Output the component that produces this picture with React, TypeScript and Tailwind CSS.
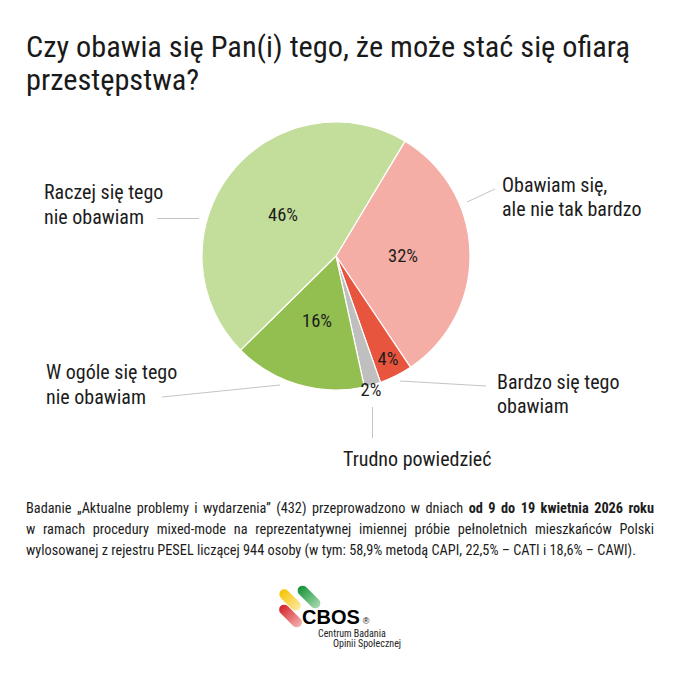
const slices = [
  { value: 32, color: "#f4aea6" },
  { value: 4, color: "#e8553f" },
  { value: 2, color: "#bfbfbf" },
  { value: 16, color: "#93bf50" },
  { value: 46, color: "#c3dd9b" },
];

const CX = 336;
const CY = 256;
const R = 134;
const START = 31;

function pt(deg: number, r = R) {
  const a = (deg * Math.PI) / 180;
  return [CX + r * Math.sin(a), CY - r * Math.cos(a)];
}

function slicePaths() {
  let a = START;
  return slices.map((s) => {
    const sweep = (s.value / 100) * 360;
    const [x1, y1] = pt(a);
    const [x2, y2] = pt(a + sweep);
    const large = sweep > 180 ? 1 : 0;
    a += sweep;
    return {
      d: `M${CX},${CY} L${x1},${y1} A${R},${R} 0 ${large} 1 ${x2},${y2} Z`,
      color: s.color,
    };
  });
}

function PieChart() {
  const paths = slicePaths();
  return (
    <svg
      width="680"
      height="380"
      viewBox="0 100 680 380"
      className="block font-['Roboto_Condensed',Roboto,sans-serif]"
    >
      {paths.map((p, i) => (
        <path key={i} d={p.d} fill={p.color} stroke="#ffffff" strokeWidth="1.2" strokeLinejoin="round" />
      ))}

      {/* leader lines */}
      <g stroke="#c4c4c4" strokeWidth="1">
        <line x1="157" y1="218.5" x2="199" y2="218.5" />
        <line x1="467" y1="202" x2="495" y2="189" />
        <line x1="162" y1="397" x2="280" y2="385" />
        <line x1="400" y1="381" x2="486" y2="386" />
        <line x1="372.5" y1="407" x2="372.5" y2="438" />
      </g>

      <g fill="#1c1c1c" fontSize="18.5" textAnchor="middle" dominantBaseline="central">
        <text x="283" y="215">46%</text>
        <text x="403" y="256">32%</text>
        <text x="317" y="321">16%</text>
        <text x="388" y="359">4%</text>
        <text x="371" y="390">2%</text>
      </g>

      <g fill="#1c1c1c" fontSize="20" dominantBaseline="central">
        <text x="44" y="192">Raczej się tego</text>
        <text x="44" y="217">nie obawiam</text>
        <text x="502" y="185">Obawiam się,</text>
        <text x="502" y="209">ale nie tak bardzo</text>
        <text x="46" y="372">W ogóle się tego</text>
        <text x="46" y="397">nie obawiam</text>
        <text x="497" y="382">Bardzo się tego</text>
        <text x="497" y="406">obawiam</text>
        <text x="343" y="459">Trudno powiedzieć</text>
      </g>
    </svg>
  );
}

function CbosLogo() {
  return (
    <div className="relative mx-auto mt-[24px] h-[64px] w-[126px]">
      <svg width="46" height="44" viewBox="0 0 46 44" className="absolute left-0 top-0">
        <defs>
          <linearGradient id="gy" x1="0" y1="0" x2="1" y2="0">
            <stop offset="0" stopColor="#f6c400" />
            <stop offset="1" stopColor="#fbe8a2" />
          </linearGradient>
          <linearGradient id="gg" x1="0" y1="0" x2="1" y2="0">
            <stop offset="0" stopColor="#149237" />
            <stop offset="1" stopColor="#a7d9ad" />
          </linearGradient>
          <linearGradient id="gr" x1="0" y1="0" x2="1" y2="0">
            <stop offset="0" stopColor="#d4232a" />
            <stop offset="1" stopColor="#f5b0b0" />
          </linearGradient>
        </defs>
        <rect x="0" y="10" width="26" height="10" rx="5" fill="url(#gy)" transform="rotate(45 13 15)" />
        <rect x="18" y="7" width="28" height="10" rx="5" fill="url(#gg)" transform="rotate(45 32 12)" />
        <rect x="-0.5" y="26" width="28" height="10" rx="5" fill="url(#gr)" transform="rotate(45 13.5 31)" />
      </svg>
      <div className="flex flex-col whitespace-nowrap pl-[25px] pt-[22px]">
        <div className="flex items-end leading-none text-black">
          <span className="font-['Liberation_Sans',Arial,sans-serif] text-[20px] font-bold leading-[20px]">CBOS</span>
          <span className="mb-[1px] ml-[3px] font-['Liberation_Sans',Arial,sans-serif] text-[9px] leading-none">®</span>
        </div>
        <div className="ml-[16px] mt-[2px] font-['Roboto_Condensed',sans-serif] text-[10px] leading-[10px] text-[#222]">
          Centrum Badania
        </div>
        <div className="ml-[31px] font-['Roboto_Condensed',sans-serif] text-[10px] leading-[10px] text-[#222]">
          Opinii Społecznej
        </div>
      </div>
    </div>
  );
}

export default function App() {
  return (
    <div className="h-[679px] w-[680px] overflow-hidden bg-white font-['Roboto_Condensed',Roboto,sans-serif] text-[#1a1a1a]">
      <header className="h-[100px] px-[26px] pt-[30px]">
        <h1 className="whitespace-nowrap text-[30.3px] font-normal leading-[33px]">
          Czy obawia się Pan(i) tego, że może stać się ofiarą
          <br />
          przestępstwa?
        </h1>
      </header>

      <PieChart />

      <div className="mt-[18px] px-[26px] text-[14.3px] leading-[21px] text-[#1c1c1c]">
        <div className="text-justify [text-align-last:justify]">
          Badanie „Aktualne problemy i wydarzenia” (432) przeprowadzono w dniach{" "}
          <span className="font-bold">od 9 do 19 kwietnia 2026 roku</span>
        </div>
        <div className="text-justify [text-align-last:justify]">
          w ramach procedury mixed-mode na reprezentatywnej imiennej próbie pełnoletnich mieszkańców Polski
        </div>
        <div>
          wylosowanej z rejestru PESEL liczącej 944 osoby (w tym: 58,9% metodą CAPI, 22,5% – CATI i 18,6% – CAWI).
        </div>
      </div>

      <CbosLogo />
    </div>
  );
}
